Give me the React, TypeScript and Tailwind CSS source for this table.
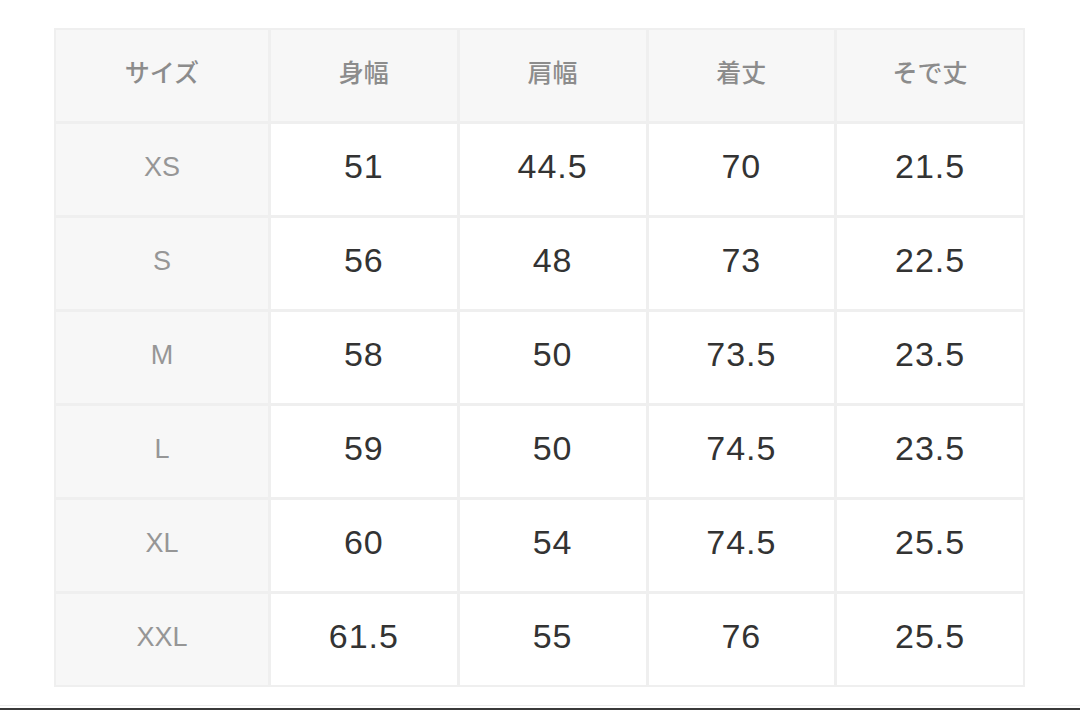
const headers = ["サイズ", "身幅", "肩幅", "着丈", "そで丈"];

const rows: [string, string, string, string, string][] = [
  ["XS", "51", "44.5", "70", "21.5"],
  ["S", "56", "48", "73", "22.5"],
  ["M", "58", "50", "73.5", "23.5"],
  ["L", "59", "50", "74.5", "23.5"],
  ["XL", "60", "54", "74.5", "25.5"],
  ["XXL", "61.5", "55", "76", "25.5"],
];

const jp = "font-['Hiragino_Sans','Noto_Sans_CJK_JP',sans-serif]";
const num = "font-['Liberation_Sans','Noto_Sans_CJK_JP',sans-serif]";

export default function App() {
  return (
    <div className="flex h-[710px] w-[1080px] flex-col bg-white">
      <div className="pl-[54px] pt-[28px]">
        <div className="grid w-[971px] grid-cols-[212px_repeat(4,1fr)] auto-rows-[91px] gap-[3px] bg-[#efefef] p-[2px]">
          {headers.map((h) => (
            <div
              key={h}
              className={`flex items-center justify-center bg-[#f7f7f7] pb-[8px] text-[25px] font-medium text-[#8c8c8c] ${jp}`}
            >
              {h}
            </div>
          ))}
          {rows.map((r) =>
            r.map((v, i) => (
              <div
                key={r[0] + i}
                className={
                  i === 0
                    ? `flex items-center justify-center bg-[#f7f7f7] pb-[4px] text-[27px] text-[#969696] ${num}`
                    : `flex items-center justify-center bg-white pb-[6px] text-[34px] tracking-[1px] text-[#333333] ${num}`
                }
              >
                {v}
              </div>
            ))
          )}
        </div>
      </div>
      <div className="mt-auto h-px bg-[#ececec]" />
      <div className="mt-[2px] h-[2px] bg-[#3a3a3a]" />
    </div>
  );
}
